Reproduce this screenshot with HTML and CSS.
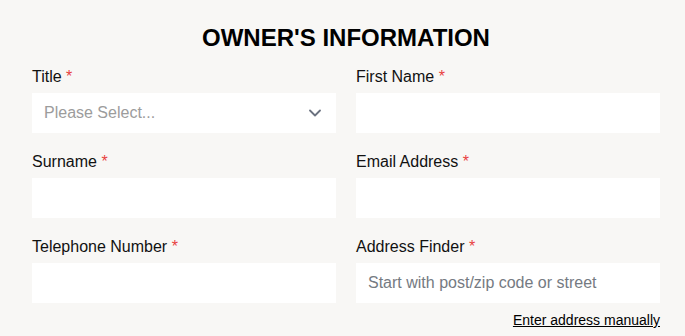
FILE: index.html
```html
<!DOCTYPE html>
<html lang="en">
<head>
    <meta charset="UTF-8">
    <meta name="viewport" content="width=device-width, initial-scale=1.0">
    <title>Owner's Information</title>
    <link rel="stylesheet" href="styles.css">
</head>
<body>
    <form id="owner">
        <h1>OWNER'S INFORMATION</h1>
        <div class="grid">
            <div class="field">
                <label for="title">Title <span class="req">*</span></label>
                <div class="select">
                    <span class="placeholder">Please Select...</span>
                    <svg width="12" height="8" viewBox="0 0 12 8"><path d="M1 1.5 L6 6.5 L11 1.5" fill="none" stroke="#6b7280" stroke-width="1.8" stroke-linecap="round" stroke-linejoin="round"/></svg>
                </div>
            </div>
            <div class="field">
                <label for="first">First Name <span class="req">*</span></label>
                <input id="first">
            </div>
            <div class="field">
                <label for="surname">Surname <span class="req">*</span></label>
                <input id="surname">
            </div>
            <div class="field">
                <label for="email">Email Address <span class="req">*</span></label>
                <input id="email">
            </div>
            <div class="field">
                <label for="phone">Telephone Number <span class="req">*</span></label>
                <input id="phone">
            </div>
            <div class="field">
                <label for="finder">Address Finder <span class="req">*</span></label>
                <input id="finder" placeholder="Start with post/zip code or street">
                <a href="#" class="manual">Enter address manually</a>
            </div>
        </div>
    </form>
</body>
</html>
```

FILE: styles.css
```css
html {
    background: #f8f7f5;
    font-family: "Liberation Sans", Arial, sans-serif;
}
body {
    margin: 0;
}
#owner {
    width: 628px;
    margin-left: 32px;
    padding-top: 25px;
}
h1 {
    margin: 0 0 17px;
    font-size: 24px;
    line-height: 26px;
    font-weight: bold;
    text-align: center;
    color: #000;
}
.grid {
    display: grid;
    grid-template-columns: 1fr 1fr;
    column-gap: 20px;
    row-gap: 20px;
}
.field {
    display: flex;
    flex-direction: column;
}
.field label {
    font-size: 16px;
    line-height: 18px;
    margin-bottom: 7px;
    color: #111;
}
.req {
    color: #e8423f;
}
.field input,
.select {
    box-sizing: border-box;
    height: 40px;
    border: 0;
    background: #fff;
    padding: 0 12px;
    font-family: inherit;
    font-size: 16px;
    outline: none;
}
.field input::placeholder {
    color: #757a82;
}
.select {
    display: flex;
    align-items: center;
    justify-content: space-between;
    padding-right: 15px;
}
.placeholder {
    color: #9c9c9c;
}
.manual {
    align-self: flex-end;
    margin-top: 9px;
    font-size: 14px;
    line-height: 16px;
    color: #000;
}
```
